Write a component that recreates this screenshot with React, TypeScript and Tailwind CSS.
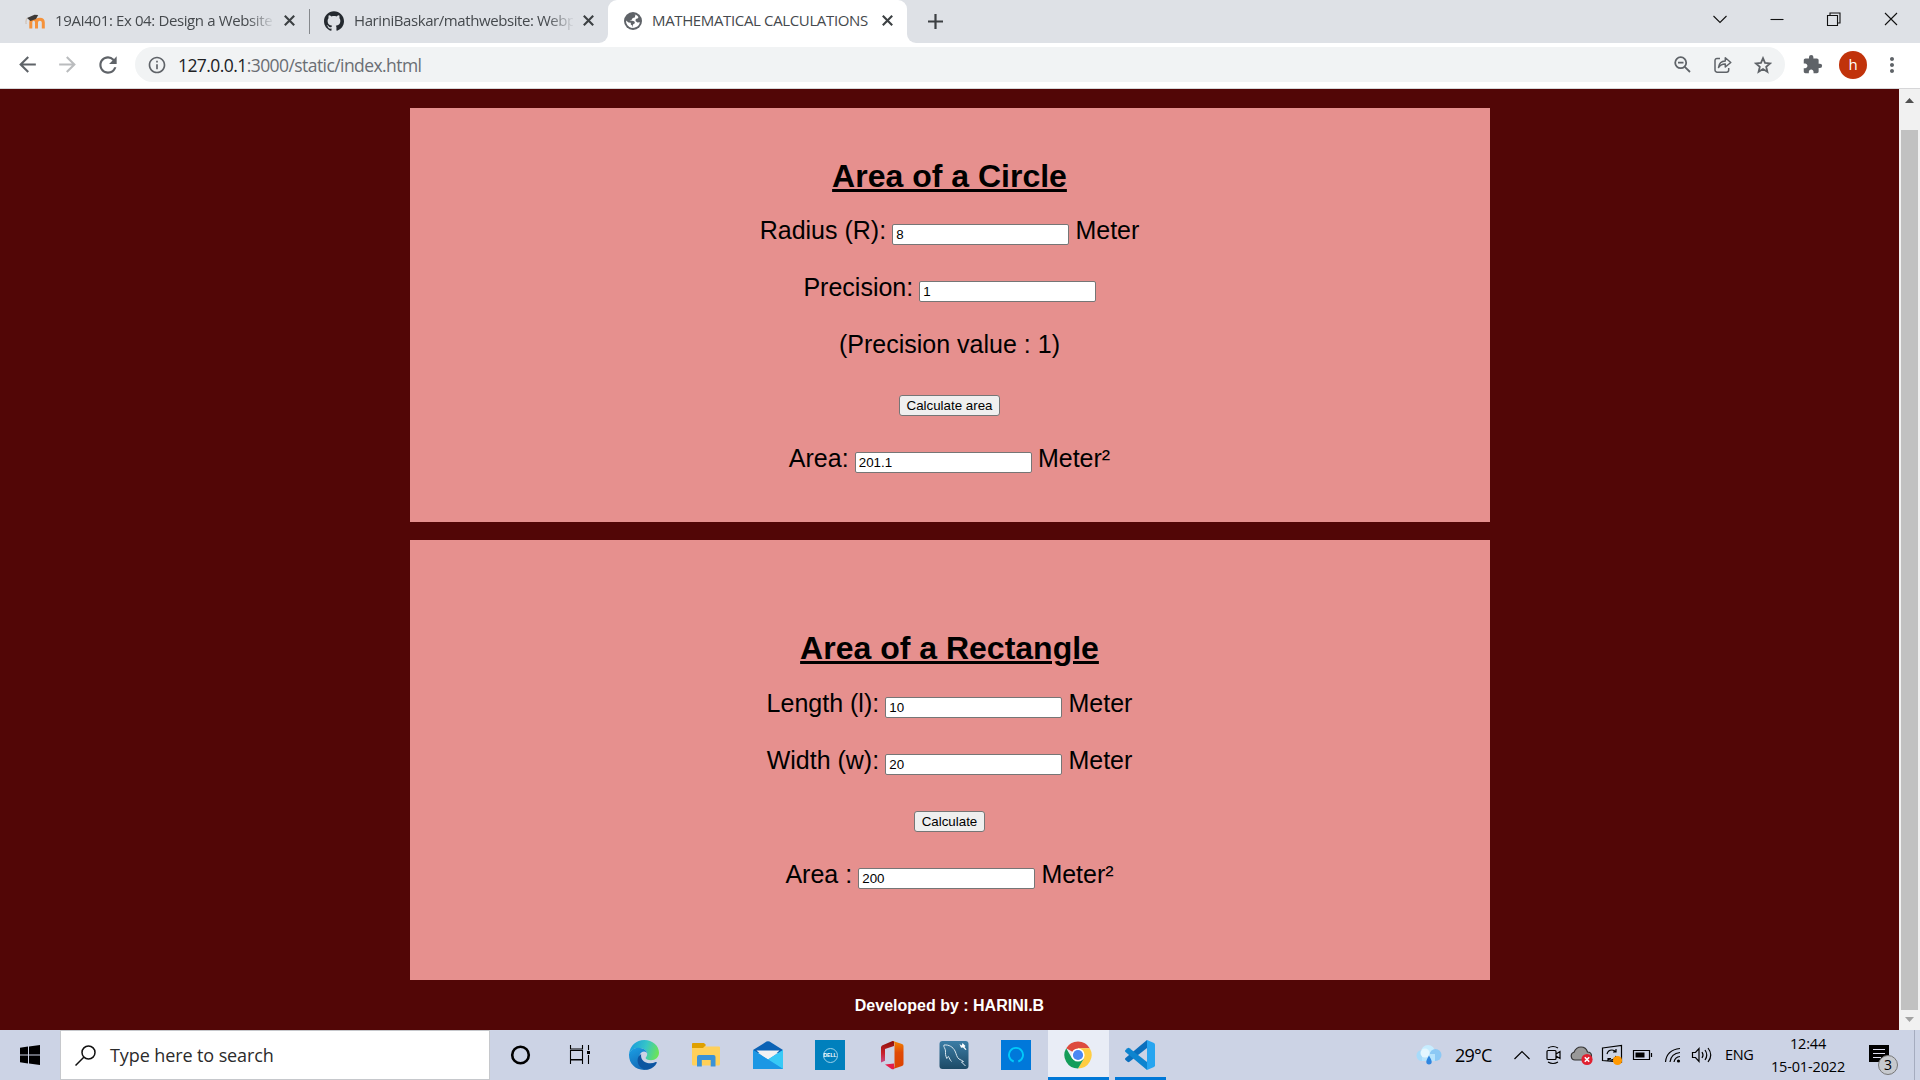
import React from "react";
import { MdArrowBack, MdArrowForward, MdRefresh, MdInfoOutline, MdExtension, MdMoreVert } from "react-icons/md";
import { SiGithub } from "react-icons/si";

function CloseX() {
  return (
    <svg className="h-[11px] w-[11px] shrink-0" viewBox="0 0 11 11" stroke="#3c4043" strokeWidth="2.1" fill="none">
      <path d="M.8.8l9.4 9.4M10.2.8L.8 10.2" />
    </svg>
  );
}

function Moodle() {
  return (
    <svg className="h-5 w-5 shrink-0" viewBox="0 0 20 20">
      <path d="M4.800 17.500v-6c0-2.200 1.100-3.300 2.900-3.300 1.900 0 2.800 1.200 2.800 3.200v6.100M10.500 17.500v-6c0-2.200 1.200-3.300 3.400-3.300 2.200 0 3.400 1.200 3.400 3.400v5.900" fill="none" stroke="#f5923a" strokeWidth="3" transform="translate(1 0)" />
      <path d="M2 7l7.500-3.300 3.700.400-2.200 3.900-5.500 2z" fill="#3d3a38" />
      <path d="M2 7.200C.8 9 .9 11 1.100 13" stroke="#c9a98c" fill="none" strokeWidth=".7" />
    </svg>
  );
}

function Globe() {
  return (
    <svg className="h-[18px] w-[18px] shrink-0" viewBox="0 0 18 18">
      <circle cx="9" cy="9" r="9" fill="#5f6368" />
      <path d="M9.500 2.200l2 .4-.6 2.400c-.3 1-1.400 1-2.200 1.200-.9.200-.5 1.700-1.500 1.900L5.400 8.300l2.700.5c1.600.2 2.600.8 2.700 1.700.200 1.200-1.200 1.200-1.700 2.100-.5 1-.2 2.600-1.300 3.300A7 7 0 0 1 2 8.500l2.500 2 2.300.3v1.700l1.400 1V16l2-.200c3-.600 5.300-2.800 5.700-5.600l-2.500.3-1.900-1.600.3-2L14 6.300l.4-1.400C13 3.200 11.500 2.300 9.500 2.200z" fill="#fff" />
    </svg>
  );
}

function TabStrip() {
  return (
    <div className="flex h-[43px] bg-[#dee1e6] text-[15px] text-[#45494d]">
      <div className="flex bg-white">
        <div className="flex w-[608px] rounded-br-[9px] bg-[#dee1e6]">
          <div className="flex w-[309px] items-center pl-[25px] pb-[2px]">
            <Moodle />
            <span className="ml-[10px] w-[218px] whitespace-nowrap tracking-[-0.38px] [mask-image:linear-gradient(to_right,black_88%,transparent_101%)]">19AI401: Ex 04: Design a Website</span>
            <span className="ml-[11px] flex"><CloseX /></span>
          </div>
          <div className="mt-[9px] h-[25px] w-px bg-[#85888c]" />
          <div className="flex w-[298px] items-center pl-[14px] pb-[2px]">
            <SiGithub className="h-5 w-5 shrink-0 text-[#24292f]" />
            <span className="ml-[10px] w-[219px] whitespace-nowrap tracking-[-0.42px] [mask-image:linear-gradient(to_right,black_88%,transparent_101%)]">HariniBaskar/mathwebsite: Webp</span>
            <span className="ml-[10px] flex"><CloseX /></span>
          </div>
        </div>
      </div>
      <div className="flex w-[299px] items-center rounded-t-[9px] bg-white pl-[16px] pb-[2px]">
        <Globe />
        <span className="ml-[10px] w-[218px] whitespace-nowrap tracking-[-0.36px]">MATHEMATICAL CALCULATIONS</span>
        <span className="ml-[12px] flex"><CloseX /></span>
      </div>
      <div className="flex flex-1 bg-white">
        <div className="flex flex-1 items-center rounded-bl-[9px] bg-[#dee1e6] pl-[21px]">
          <svg className="h-[15px] w-[15px]" viewBox="0 0 15 15" stroke="#3c4043" strokeWidth="2.200"><path d="M7.500 0v15M0 7.500h15" /></svg>
          <svg className="-mt-[6px] ml-[770px] h-[14px] w-[185px]" viewBox="0 0 185 14" fill="none" stroke="#111" strokeWidth="1.100">
            <path d="M.5 4l6.500 6.500L13.500 4" />
            <path d="M57.500 7.500h13" />
            <path d="M114.500 3.500h10v10h-10zM117 3.500v-2.500h10v10h-2.500" />
            <path d="M172 1l12 12M184 1l-12 12" />
          </svg>
        </div>
      </div>
    </div>
  );
}

function Toolbar() {
  return (
    <div className="flex h-[46px] items-center border-b border-[#d6d6d8] bg-white pb-[2px] text-[#5f6368]">
      <MdArrowBack className="ml-[15px] h-[25px] w-[25px]" />
      <MdArrowForward className="ml-[15px] h-[25px] w-[25px] text-[#babcbe]" />
      <MdRefresh className="ml-[15px] h-[26px] w-[26px]" />
      <div className="ml-[14px] flex h-[35px] w-[1650px] items-center rounded-full bg-[#f1f3f4] pl-[12px]">
        <MdInfoOutline className="mt-px h-5 w-5" />
        <span className="mt-[2px] ml-[11px] w-[1484px] whitespace-nowrap text-[17.500px] tracking-[-0.57px] text-[#6a6e73]"><span className="text-[#202124]">127.0.0.1</span>:3000/static/index.html</span>
        <svg className="ml-[12px] h-[17px] w-[17px]" viewBox="0 0 17 17" fill="none" stroke="#5f6368" strokeWidth="1.800"><circle cx="6.700" cy="6.700" r="5.500" /><path d="M10.800 10.800l5.200 5.200M4 6.700h5.500" /></svg>
        <svg className="ml-[23px] h-[18px] w-[18px]" viewBox="0 0 18 18" fill="none" stroke="#5f6368" strokeWidth="1.500" strokeLinejoin="round"><path d="M6 2.500H3a2 2 0 0 0-2 2V14a2.200 2.200 0 0 0 2.200 2.200h9.300A2.200 2.200 0 0 0 14.700 14v-2" /><path d="M4.500 11.500c.5-4.500 3-6.300 6.800-6.500V1.800l5.500 4.700-5.500 4.500V8c-3-.1-5 1-6.800 3.500z" /></svg>
        <svg className="ml-[22px] h-[18px] w-[18px]" viewBox="0 0 18 18" fill="none" stroke="#5f6368" strokeWidth="1.800"><path d="M9 2.200l2 4.700 5.100.5-3.900 3.400 1.200 5L9 13.100l-4.400 2.700 1.200-5-3.900-3.400 5.100-.5z" /></svg>
      </div>
      <MdExtension className="ml-[17px] h-[21px] w-[21px]" />
      <div className="ml-[16px] flex h-7 w-7 items-center justify-center rounded-full bg-[#c1330b] pb-px text-[15px] text-white">h</div>
      <MdMoreVert className="ml-[13px] h-[24px] w-[24px]" />
    </div>
  );
}

function Row({ children }: { children: React.ReactNode }) {
  return <div className="flex h-[57px] items-center justify-center whitespace-pre text-[25px] leading-[28px]">{children}</div>;
}

function Label({ children }: { children: string }) {
  return <span className="mb-[2px]">{children}</span>;
}

function Field({ value }: { value: string }) {
  return <input readOnly defaultValue={value} className="-mx-[0.8px] mt-2 h-[21px] w-[177px] rounded-[2px] border border-[#767676] bg-white px-[3px] text-[13.330px] leading-none text-black outline-none" />;
}

function Btn({ label, wide }: { label: string; wide?: boolean }) {
  return <button className={`${wide ? "w-[101px]" : "w-[71px]"} mt-2 flex h-[21px] items-center justify-center rounded-[3px] border border-[#767676] bg-[#efefef] text-[13.330px] leading-none`}>{label}</button>;
}

function Page() {
  return (
    <div className="flex h-[941px] bg-[#520606] font-['Liberation_Sans',Arial,sans-serif] text-black">
      <main className="flex flex-1 flex-col items-center pt-[19px]">
        <section className="h-[414px] w-[1080px] bg-[#e6908e] pt-[50px]">
          <h1 className="mb-[7px] text-center text-[32px] leading-[37px] font-bold underline">Area of a Circle</h1>
          <Row><Label>Radius (R): </Label><Field value="8" /><Label> Meter</Label></Row>
          <Row><Label>Precision: </Label><Field value="1" /></Row>
          <Row><Label>(Precision value : 1)</Label></Row>
          <Row><Btn label="Calculate area" wide /></Row>
          <Row><Label>Area: </Label><Field value="201.1" /><Label> Meter²</Label></Row>
        </section>
        <section className="mt-[18px] h-[440px] w-[1080px] bg-[#e6908e] pt-[90px]">
          <h1 className="mb-[8px] text-center text-[32px] leading-[37px] font-bold underline">Area of a Rectangle</h1>
          <Row><Label>Length (l): </Label><Field value="10" /><Label> Meter</Label></Row>
          <Row><Label>Width (w): </Label><Field value="20" /><Label> Meter</Label></Row>
          <Row><Btn label="Calculate" /></Row>
          <Row><Label>Area : </Label><Field value="200" /><Label> Meter²</Label></Row>
        </section>
        <footer className="mt-[17px] text-[16px] leading-[18px] font-bold text-white">Developed by : HARINI.B</footer>
      </main>
      <div className="flex w-[21px] flex-col items-center bg-[#f1f1f1]">
        <svg className="mt-[9px] h-[5px] w-[9px]" viewBox="0 0 9 5"><path d="M0 5L4.500 0 9 5z" fill="#505050" /></svg>
        <div className="mt-[27px] h-[880px] w-[17px] bg-[#c1c1c1]" />
        <svg className="mt-[7px] h-[5px] w-[9px]" viewBox="0 0 9 5"><path d="M0 0l4.500 5L9 0z" fill="#a3a3a3" /></svg>
      </div>
    </div>
  );
}

function Icon({ children }: { children: React.ReactNode }) {
  return <svg className="h-[30px] w-[30px]" viewBox="0 0 30 30" fill="none">{children}</svg>;
}

function Slot({ children }: { children: React.ReactNode }) {
  return <div className="flex w-[62px] shrink-0 items-center justify-center">{children}</div>;
}

function TaskApps() {
  return (
    <>
      <div className="flex w-[61px] items-center justify-center">
        <Icon><circle cx="14.500" cy="15" r="8.300" stroke="#000" strokeWidth="2.600" /></Icon>
      </div>
      <Slot>
        <Icon><path d="M3.500 5v4h12V5M3.500 24v-4h12v4M3.500 10.500h12v9h-12zM21.500 5v5M21.500 15v9" stroke="#000" strokeWidth="1.100" /><path d="M20 11h3v3h-3z" fill="#000" /></Icon>
      </Slot>
      <Slot>
        <Icon>
          <defs>
            <linearGradient id="eg" x1="2" y1="5" x2="30" y2="14" gradientUnits="userSpaceOnUse"><stop stopColor="#1c9edb" /><stop offset=".5" stopColor="#36c5c8" /><stop offset="1" stopColor="#70e64e" /></linearGradient>
            <linearGradient id="eb" x1="2" y1="8" x2="12" y2="30" gradientUnits="userSpaceOnUse"><stop stopColor="#1b9de2" /><stop offset="1" stopColor="#1268b5" /></linearGradient>
          </defs>
          <path d="M0 14C1 5.500 7.500 0 15.200 0 23.500 0 30 5.600 30 12.800c0 4.500-3.600 7.500-8 7.500-3.300 0-5.400-1-5.400-2.200 0-.9 1.600-1.500 1.600-4.100 0-3-3-5.500-7-6C6.500 7.500 2 9.500 0 14z" fill="url(#eg)" />
          <path d="M0 14c2-4.600 6.200-6.700 11-6.100 4.300.500 7.200 3 7.200 6 0-1.500-1.500-2.500-3.200-2.500-2.800 0-5 3.200-5 7.200 0 6 4.600 10.200 8.500 11C8 31.500 0 24.500 0 15z" fill="url(#eb)" />
          <path d="M12.200 14c-3.600 2.200-4.600 6.500-2.700 10.500 2 4 6 5.800 10 5 3.800-1 6.700-3.500 8.200-6.600.4-.8-.3-1.200-1-.8-5 2.500-12.500 1.200-14.300-4-.4-1.500-.4-3-.2-4.100z" fill="#0c55a1" />
        </Icon>
      </Slot>
      <Slot>
        <Icon>
          <path d="M1 3.500h11l3 3H28a1 1 0 0 1 1 1V24a1.500 1.500 0 0 1-1.500 1.500h-25A1.500 1.500 0 0 1 1 24z" fill="#ffd05a" />
          <path d="M2 3h11l2 2-3 3H1V4a1 1 0 0 1 1-1z" fill="#dfa000" />
          <path d="M6 26.500V17a2 2 0 0 1 2-2h14.500a2 2 0 0 1 2 2v9.500h-4.800V20h-8.900v6.500z" fill="#3a92d8" />
        </Icon>
      </Slot>
      <Slot>
        <Icon>
          <path d="M0 10L13.500 1.600q1.500-.9 3 0L30 10l-3 3H3z" fill="#0b62b5" />
          <path d="M3.500 10.500h23L15 21z" fill="#f3f3f3" />
          <path d="M0 10l15 9.500L30 10v19H0z" fill="#22a9ed" />
          <path d="M30 10v19L15 19.500z" fill="#38c9f6" />
          <path d="M0 10v19h30L15 19.500z" fill="#1c97e4" />
        </Icon>
      </Slot>
      <Slot>
        <div className="flex h-[30px] w-[30px] items-center justify-center bg-[#0080bd]">
          <div className="flex h-[15px] w-[15px] items-center justify-center rounded-full border border-[#9ed2ea] font-['Liberation_Sans',sans-serif] text-[5px] leading-none font-bold text-white">DELL</div>
        </div>
      </Slot>
      <Slot>
        <Icon>
          <defs>
            <linearGradient id="ol" x1="8" y1="2" x2="6" y2="27" gradientUnits="userSpaceOnUse"><stop stopColor="#93130e" /><stop offset=".45" stopColor="#c9202a" /><stop offset="1" stopColor="#c75fb4" /></linearGradient>
            <linearGradient id="or" x1="20" y1="0" x2="22" y2="28" gradientUnits="userSpaceOnUse"><stop stopColor="#f58a00" /><stop offset=".45" stopColor="#e04a05" /><stop offset="1" stopColor="#dc4200" /></linearGradient>
          </defs>
          <path d="M15.500 1L5 5.500 4 7v15.500l4-1.700V9l9-3V1z" fill="url(#ol)" />
          <path d="M8 24.500l9-1V29q-1 .6-2.500 0z" fill="#e51c4a" />
          <path d="M16 1l9 3q1.500.6 1.500 2v18q0 1.500-1.500 2l-9 3q1.500-1 1.500-3V4q0-2-1.500-3z" fill="url(#or)" />
        </Icon>
      </Slot>
      <Slot>
        <Icon>
          <defs><linearGradient id="my" x1="15" y1="1" x2="15" y2="29" gradientUnits="userSpaceOnUse"><stop stopColor="#3b7da6" /><stop offset="1" stopColor="#1d4a66" /></linearGradient></defs>
          <rect x=".5" y="1" width="29" height="28" rx="3" fill="url(#my)" />
          <path d="M5 5c5-.5 9 2 11 6 1.500 3 1.500 6 4 8 1.500 1 3 1.300 4.500 2.500l-2 .5 4 4M5 5c-1 1.500 1.500 3.500 1.500 6 0 2.500-.3 4 1.300 7.500.8-1.500 1-2 1.700-2 .8 1.500 1.500 3.500 3 5" stroke="#d8e6ee" strokeWidth="1" />
          <path d="M20.500 4l2.300 1.500L23.500 3l3 3-1 1 2 2.500-1 .5-2.500-2.500-2 .3z" fill="#fff" />
        </Icon>
      </Slot>
      <Slot>
        <Icon><path d="M0 0h30v30H0z" fill="#0078da" /><path d="M12.700 21.500a7 7 0 1 1 4.600 0" stroke="#00cafa" strokeWidth="1.900" /></Icon>
      </Slot>
      <div className="ml-px flex w-[61px] items-center justify-center border-b-[3px] border-[#0078d7] bg-[#e9edf6] pt-[3px] pr-px">
        <Icon>
          <path d="M15 15L3.220 8.200A13.600 13.600 0 0 1 26.780 8.200H15z" fill="#dd4b3e" />
          <path d="M26.780 8.200A13.600 13.600 0 0 1 15 28.600L20.900 18.400 15 8.200z" fill="#ffcd42" />
          <path d="M3.220 8.200A13.600 13.600 0 0 0 15 28.600L20.900 18.400 9.100 18.400z" fill="#149d59" />
          <circle cx="15" cy="15" r="6.600" fill="#fff" /><circle cx="15" cy="15" r="5.100" fill="#4a88f4" />
        </Icon>
      </div>
      <div className="ml-[6px] flex w-[51px] items-center justify-center border-b-[3px] border-[#0078d7] pt-[3px] pr-px">
        <Icon>
          <path d="M22 0v8L4.500 21.800q-1 .7-2 0L.5 20q-1-1 0-2z" fill="#0a6fbd" />
          <path d="M22 30v-8L4.500 8.200q-1-.7-2 0L.5 10q-1 1 0 2z" fill="#0d84cf" />
          <path d="M22 0l7 3q1 .5 1 1.700v20.600q0 1.200-1 1.700l-7 3z" fill="#27a5f0" />
        </Icon>
      </div>
    </>
  );
}

function Tray() {
  return (
    <div className="flex flex-1 items-center text-black">
      <svg className="ml-[250px] h-[22px] w-[26px]" viewBox="0 0 26 22">
        <circle cx="12" cy="8" r="7" fill="#c7edff" /><circle cx="19.500" cy="11" r="6" fill="#8cc9f5" /><circle cx="6" cy="11.500" r="5.500" fill="#a7dbfa" /><rect x="6" y="10" width="13" height="7" fill="#b8e4fc" /><circle cx="9" cy="9" r="4.500" fill="#e4f7ff" />
        <path d="M13 11.500c1.500 3 2.700 4.400 2.700 6.200a2.700 2.700 0 0 1-5.400 0c0-1.800 1.200-3.200 2.700-6.200z" fill="#2f86e0" />
      </svg>
      <span className="ml-[13px] w-[59px] pt-px text-[18px] tracking-[-0.75px] whitespace-nowrap">29°C</span>
      <svg className="h-[30px] w-[206px]" viewBox="0 0 206 30" fill="none" stroke="#000" strokeWidth="1.200">
        <path d="M.5 19L8 11.500l7.500 7.500" />
        <path d="M33 11.500q0-1 1-1h7q1 0 1 1v7q0 1-1 1h-7q-1 0-1-1zM42 14l4-2.500v7L42 16M34 8q5-3 10 0M34 22q5 3 10 0" />
        <path d="M61 20a4 4 0 0 1-1-7.800Q62 7 67 7q5 0 6.500 5 4 0 4 4t-4 4z" fill="#999" stroke="#333" />
        <circle cx="73" cy="19.500" r="5.600" fill="#e02030" stroke="none" /><path d="M70.800 17.300l4.400 4.400m0-4.400l-4.400 4.400" stroke="#fff" strokeWidth="1.600" />
        <path d="M88.500 8l19-2.500V22l-19-1.500zM93 14q1-4 5-4 2 0 4 2m0-3v3h-3M102 16q-1 4-5 4-2 0-3-1.500m0 3v-3h3" />
        <circle cx="103.500" cy="20.500" r="4.600" fill="#ff9800" stroke="none" />
        <path d="M119.500 10.500h16v9h-16zM137.500 13v4" /><path d="M121.500 12.500h9v5h-9z" fill="#000" stroke="none" />
        <path d="M151.500 22q1-12 14.500-13.500M156 22q1-8.500 10-9.500M160 22q1-5 6-5.500" /><circle cx="164.500" cy="21" r="1.600" fill="#000" stroke="none" />
        <path d="M178.500 12.500h3l3.500-4v13l-3.500-4h-3zM188 12q2 3 0 6M191 10q3.500 5 0 10M194 8q5.500 7 0 14" />
      </svg>
      <span className="ml-[5px] w-[41px] text-[14.500px] tracking-[-0.4px]">ENG</span>
      <div className="flex w-[84px] flex-col items-center text-[14.500px] leading-[23px] tracking-[-0.15px] whitespace-nowrap">
        <span>12:44</span><span>15-01-2022</span>
      </div>
      <div className="relative ml-[19px] h-[34px] w-[30px]">
        <svg className="h-[34px] w-[30px]" viewBox="0 0 30 34"><path d="M0 7h20v17H10l-2 0H0z" fill="#000" /><path d="M4 11.500h12M4 15.500h12M4 19.500h8" stroke="#dde" strokeWidth="1.200" /></svg>
        <div className="absolute top-[17px] left-[9px] flex h-5 w-5 items-center justify-center rounded-full border border-[#777] bg-[#c6c9ce] text-[14px] leading-none font-medium">3</div>
      </div>
      <div className="ml-[15px] h-full w-px bg-[#a5acbf]" />
    </div>
  );
}

function Taskbar() {
  return (
    <div className="flex h-[50px] bg-[#ccd3e5]">
      <div className="flex w-[60px] items-center justify-center">
        <svg className="h-5 w-5" viewBox="0 0 20 20"><path d="M0 2.700l8-1.100v7.900H0zM9 1.400L20 0v9.500H9zM0 10.500h8v7.900l-8-1.100zM9 10.500h11V20L9 18.500z" fill="#000" /></svg>
      </div>
      <div className="flex w-[430px] items-center border border-[#c6c8cc] bg-white pl-[14px]">
        <svg className="h-[21px] w-[21px]" viewBox="0 0 21 21" fill="none" stroke="#111" strokeWidth="1.500"><circle cx="13.500" cy="7.500" r="6.500" /><path d="M8.800 12.200L.5 20.500" /></svg>
        <span className="ml-[14px] text-[18px] tracking-[-0.1px] text-[#2b2b2b]">Type here to search</span>
      </div>
      <TaskApps />
      <Tray />
    </div>
  );
}

export default function App() {
  return (
    <div className="h-[1080px] w-[1920px] overflow-hidden font-['Open_Sans','Noto_Sans',sans-serif]">
      <TabStrip />
      <Toolbar />
      <Page />
      <Taskbar />
    </div>
  );
}
